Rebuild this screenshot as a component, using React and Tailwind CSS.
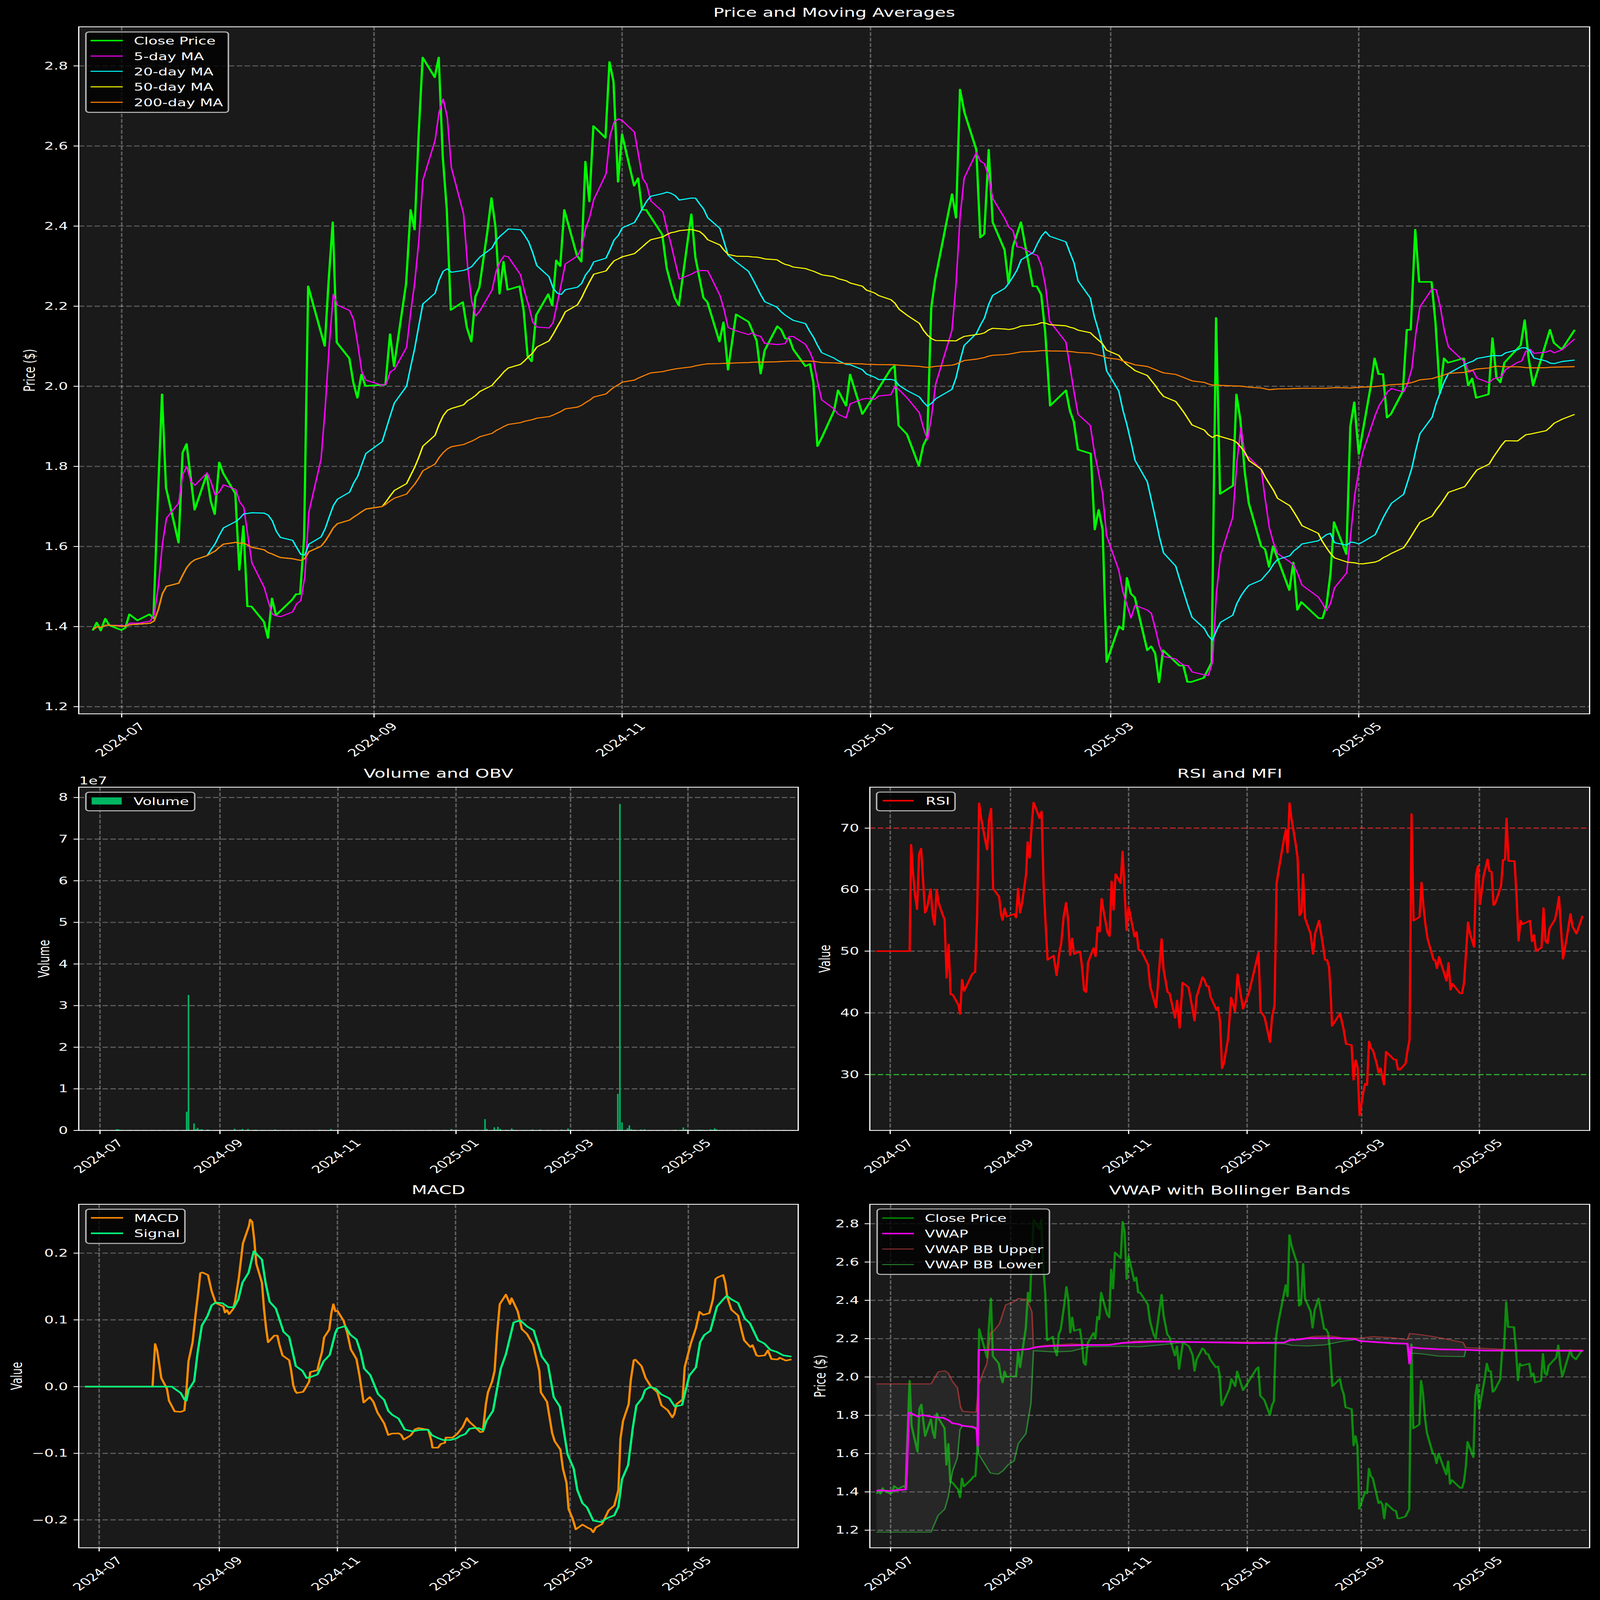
const z4 = [42,1380,50,1362,58,1380,67,1353,75,1368,99,1379,107,1374,115,1343,131,1357,155,1343,163,1352,171,1100,180,842,188,1055,213,1180,221,975,229,955,237,1030,245,1105,269,1025,277,1085,285,1115,294,997,302,1022,326,1068,334,1242,342,1142,350,1325,358,1325,383,1360,391,1397,399,1307,407,1345,439,1310,447,1297,455,1297,463,1170,471,596,504,732,512,580,520,450,528,724,553,760,561,815,569,850,577,797,585,823,625,820,634,705,642,778,666,590,675,422,683,467,691,250,699,75,723,120,731,75,739,300,747,420,755,650,779,632,787,690,796,722,804,620,812,598,828,470,836,395,844,460,852,613,860,540,868,604,892,596,900,650,908,755,916,767,925,662,949,614,957,640,965,537,973,550,981,422,1006,525,1015,540,1023,312,1031,403,1039,231,1063,258,1071,85,1079,130,1088,358,1096,250,1120,367,1128,350,1136,422,1144,422,1176,478,1185,555,1193,590,1201,622,1209,640,1234,432,1242,530,1258,622,1266,632,1290,722,1298,678,1307,786,1323,660,1348,677,1364,720,1372,795,1380,742,1405,687,1413,695,1421,715,1429,715,1437,740,1461,778,1470,773,1477,815,1485,960,1494,940,1518,880,1526,833,1542,868,1550,797];
const z5 = [79,887,87,873,136,785,144,777,152,913,169,933,193,1005,202,958,210,940,218,645,226,580,260,386,268,440,276,148,285,200,309,285,317,485,325,477,334,285,342,450,366,513,374,590,383,505,399,450,423,596,431,596,440,615,448,700,458,868,490,833,498,880,506,905,514,968,540,977,548,1150,556,1105,564,1150,572,1452,597,1370,605,1378,613,1260,621,1296,629,1305,654,1425,662,1416,670,1432,678,1498,686,1425,719,1460,727,1460,735,1497,743,1497,768,1488,784,1453,793,668,801,1069,827,1050,834,842,842,900,851,1020,859,1090,884,1188,892,1195,900,1235,908,1188,941,1288,949,1225,957,1333,965,1315,1000,1352,1008,1352,1016,1322,1024,1250,1031,1133,1056,1206,1064,915,1072,860,1081,978,1105,825,1113,760,1121,796,1130,796,1138,895,1146,887,1170,835,1178,695,1186,695,1195,467,1203,586,1228,586,1236,680,1245,840,1253,760,1261,770,1293,760,1302,822,1310,806,1318,850,1343,842,1351,714,1359,804,1367,815,1375,770,1408,730,1416,673,1424,760,1433,822,1467,695,1475,725,1491,740,1517,695];
const rsiZ = [120,793,187,793,190,347,194,470,198,560,202,617,206,385,210,363,214,500,218,632,222,610,229,533,233,640,237,683,241,535,245,590,253,640,257,660,261,905,265,765,269,975,273,975,285,1020,288,1057,292,913,296,960,312,890,316,882,318,882,322,650,326,173,330,235,338,325,342,367,346,240,350,195,354,530,366,565,370,640,373,663,377,613,381,648,393,640,396,637,400,652,404,530,408,632,412,590,420,470,423,335,427,402,431,270,435,170,439,190,447,235,451,207,455,520,459,680,463,830,475,812,479,866,481,895,487,790,490,765,495,650,500,590,504,660,508,810,512,740,516,805,528,795,532,860,536,958,540,965,544,840,555,780,559,815,563,692,567,712,571,573,575,625,583,715,587,730,591,500,595,620,599,470,609,508,613,375,621,705,625,607,633,690,637,732,641,713,645,787,650,790,664,850,668,940,680,1030,691,742,695,870,703,965,707,970,718,1073,722,1000,727,1115,733,925,745,945,757,1085,761,985,773,902,777,915,781,940,785,940,789,985,801,1040,804,1028,808,1090,812,1285,816,1260,824,1160,830,988,838,1047,843,890,848,960,854,1035,866,965,885,798,889,1045,897,1070,908,1175,912,1070,917,1020,921,510,925,455,936,320,940,283,943,380,947,172,951,240,959,340,963,400,967,643,971,630,974,470,978,655,989,720,994,805,998,720,1006,665,1014,770,1018,830,1022,830,1026,860,1030,1005,1032,1107,1048,1055,1055,1120,1060,1182,1071,1187,1075,1333,1079,1250,1083,1280,1087,1482,1095,1380,1098,1350,1102,1355,1106,1172,1110,1200,1114,1210,1122,1270,1125,1303,1129,1285,1136,1353,1140,1215,1156,1248,1160,1248,1164,1290,1168,1290,1179,1265,1183,1210,1187,1165,1191,218,1195,665,1207,650,1211,505,1215,610,1219,685,1223,740,1235,830,1238,830,1242,865,1246,817,1261,918,1265,842,1269,955,1273,930,1288,970,1292,970,1296,925,1304,672,1308,720,1316,775,1320,475,1324,435,1328,597,1335,480,1343,408,1347,458,1351,460,1355,600,1358,595,1370,520,1374,410,1378,410,1381,236,1385,415,1397,415,1401,560,1405,750,1409,665,1413,680,1425,668,1428,665,1432,752,1436,725,1440,793,1451,778,1455,612,1459,750,1463,760,1467,698,1478,660,1482,620,1486,565,1490,700,1494,825,1502,730,1505,690,1509,637,1513,690,1521,720,1533,645];
const macdZ = [165,866,297,866,302,687,306,715,310,770,314,830,325,875,329,925,340,970,352,972,359,966,363,880,367,760,375,680,381,560,386,470,390,390,394,387,405,398,412,465,420,515,435,530,438,555,442,545,446,562,454,540,458,505,465,410,473,265,481,215,485,190,487,165,491,175,495,250,499,350,510,430,514,540,518,620,522,680,534,652,540,652,544,690,550,735,563,755,567,800,571,860,575,885,578,893,590,888,594,875,602,845,604,805,618,797,622,760,627,720,631,660,641,627,645,560,649,520,653,550,657,548,669,590,676,640,683,710,694,750,700,820,708,933,720,910,727,930,735,975,748,1020,756,1069,763,1063,776,1062,781,1068,786,1088,800,1070,808,1045,815,1040,834,1047,840,1095,842,1122,853,1122,858,1107,866,1102,868,1080,881,1080,890,1065,901,1035,909,998,913,1012,925,1035,935,1057,940,1055,946,940,950,890,958,845,963,800,968,640,973,520,985,480,993,520,996,495,1008,550,1016,625,1026,645,1038,690,1050,800,1053,890,1065,930,1075,1060,1080,1095,1091,1130,1096,1210,1103,1270,1107,1380,1115,1420,1121,1465,1134,1445,1146,1460,1150,1463,1155,1477,1160,1457,1172,1443,1185,1385,1196,1365,1204,1300,1208,1085,1213,1010,1224,940,1228,840,1234,755,1237,753,1249,780,1257,830,1267,865,1280,890,1288,945,1300,965,1309,995,1313,980,1317,940,1329,920,1333,785,1345,685,1355,620,1362,552,1369,565,1381,558,1388,500,1393,415,1397,408,1408,398,1412,430,1416,490,1424,543,1437,568,1445,640,1449,672,1461,700,1465,692,1473,735,1477,738,1489,735,1495,714,1502,750,1514,752,1518,745,1530,757,1541,752];
const signalZ = [165,866,335,866,340,875,352,893,359,920,363,925,367,880,378,843,385,720,393,610,404,570,412,525,420,513,433,516,445,533,456,533,464,500,472,430,484,388,494,298,510,333,517,430,525,510,537,538,552,636,563,658,576,780,589,800,597,830,606,825,618,815,630,760,642,733,653,640,657,622,672,612,682,648,694,668,702,720,709,790,721,818,736,897,748,922,756,968,764,985,776,1000,788,1046,804,1054,816,1048,833,1047,841,1070,853,1082,863,1090,877,1090,889,1083,896,1073,906,1065,914,1043,922,1040,932,1040,941,1050,947,1010,960,967,975,790,985,730,1000,597,1013,588,1027,615,1039,630,1055,740,1067,775,1078,910,1090,950,1105,1150,1117,1210,1124,1300,1134,1355,1143,1373,1155,1428,1170,1434,1184,1416,1196,1406,1204,1370,1211,1255,1223,1195,1232,1040,1239,945,1250,915,1256,880,1265,868,1276,873,1287,898,1303,915,1314,950,1328,943,1342,820,1355,785,1363,680,1371,650,1383,632,1396,530,1408,500,1415,485,1424,500,1437,515,1450,580,1460,600,1476,672,1488,685,1500,712,1512,720,1525,735,1541,740];
const vwapZ = [140,1320,148,1318,168,1322,178,1318,198,1315,200,1250,204,990,206,988,222,1005,230,998,240,1002,255,1008,272,1010,282,1020,290,1033,302,1037,310,1044,330,1048,338,1055,340,1130,342,722,360,722,365,720,415,722,440,718,455,710,480,705,520,703,545,701,600,700,625,692,650,689,700,686,760,688,820,690,880,693,945,690,955,680,975,677,990,672,1040,671,1085,676,1095,684,1130,689,1160,693,1188,695,1192,780,1196,710,1210,714,1250,719,1300,721,1340,724,1535,725];
const upperZ = [140,866,248,866,262,815,275,810,282,820,290,855,300,882,306,963,310,982,330,986,337,985,342,870,352,810,358,780,365,650,372,640,383,610,395,530,410,518,420,503,437,507,447,560,450,710,470,703,500,699,525,696,560,700,600,698,650,684,690,682,760,687,820,688,890,688,945,690,955,682,975,675,1005,664,1035,662,1060,670,1090,672,1120,665,1160,670,1188,678,1192,652,1215,657,1240,665,1275,680,1298,690,1303,712,1340,715,1400,721,1535,722];
const lowerZ = [140,1496,248,1496,262,1425,275,1398,282,1345,290,1240,300,1180,305,1060,310,1045,330,1052,338,1060,342,1165,352,1200,365,1245,380,1250,390,1235,400,1210,412,1193,420,1120,435,1078,445,950,450,725,490,730,525,727,560,708,625,706,660,708,700,700,750,689,850,691,945,695,960,702,990,705,1025,700,1060,685,1085,678,1100,683,1160,695,1188,697,1192,735,1215,738,1250,748,1300,750,1303,722,1340,726,1535,727];
const volZ = [82,1500,86,1500,90,1507,102,1510,107,1510,112,1507,132,1510,166,1510,234,1320,238,119,250,1440,254,1497,258,1487,263,1502,267,1500,280,1502,284,1510,288,1510,292,1510,313,1507,321,1507,338,1495,342,1507,346,1509,350,1505,355,1497,367,1497,372,1510,376,1510,380,1507,384,1505,397,1507,426,1502,430,1509,434,1510,465,1510,502,1510,514,1510,522,1505,526,1507,531,1507,547,1497,552,1510,575,1510,587,1510,590,1510,603,1510,632,1507,648,1510,661,1510,669,1510,690,1510,700,1510,704,1510,708,1510,720,1507,733,1507,749,1510,753,1510,761,1507,765,1507,792,1510,808,1497,838,1507,846,1507,881,1396,885,1497,901,1480,905,1502,909,1475,914,1497,926,1505,930,1507,934,1510,939,1492,943,1505,955,1510,959,1510,963,1510,967,1510,971,1507,984,1502,988,1510,996,1510,1001,1502,1019,1507,1031,1507,1043,1510,1047,1502,1061,1492,1073,1507,1077,1510,1102,1507,1131,1510,1144,1510,1169,1136,1190,1490,1178,1429,1194,1459,1198,1500,1202,1507,1206,1505,1219,1502,1227,1500,1231,1510,1236,1510,1248,1510,1256,1510,1284,1510,1291,1507,1295,1505,1311,1482,1316,1500,1320,1505,1324,1507,1337,1507,1341,1507,1345,1505,1349,1505,1353,1507,1366,1510,1370,1500,1375,1505,1379,1491,1383,1500,1397,1510,1401,1510,1405,1507,1409,1510,1413,1510,1429,1510,1433,1510,1437,1510,1453,1510,1457,1510,1461,1510,1465,1510,1485,1510,1500,1510,1514,1510,1530,1510];

const pairs = (a, fx, fy) => {
  const out = [];
  for (let i = 0; i < a.length; i += 2) out.push([fx(a[i]), fy(a[i + 1])]);
  return out;
};
const toPath = (pts) => pts.map((p, i) => `${i ? 'L' : 'M'}${p[0].toFixed(1)} ${p[1].toFixed(1)}`).join('');

// Close price in the coordinates of the top chart
const closeMain = [
  ...pairs(z4, (x) => 200 + x / 0.7127, (y) => 100 + y / 0.56),
  ...pairs(z5, (x) => 2300 + x / 0.7226, (y) => 100 + y / 0.56),
];
const interp = (pts, x) => {
  if (x <= pts[0][0]) return pts[0][1];
  for (let i = 1; i < pts.length; i++) {
    if (x <= pts[i][0]) {
      const t = (x - pts[i - 1][0]) / (pts[i][0] - pts[i - 1][0]);
      return pts[i - 1][1] + t * (pts[i][1] - pts[i - 1][1]);
    }
  }
  return pts[pts.length - 1][1];
};
const HOLIDAYS = [3, 63, 150, 177, 184, 192, 203, 231, 291, 329, 353];
const days = [];
for (let d = -7; d <= 357; d++) {
  const dow = ((d % 7) + 7) % 7;
  if (dow < 5 && !HOLIDAYS.includes(d)) days.push(d);
}
const dayX = (d) => 340 + d * 11.37;
const daily = days.map((d) => interp(closeMain, dayX(d)));
const rolling = (n) =>
  days.map((d, i) => {
    const from = Math.max(0, i - n + 1);
    let s = 0;
    for (let k = from; k <= i; k++) s += daily[k];
    return [dayX(d), s / (i - from + 1)];
  });

const GRID = { stroke: '#ffffff', strokeOpacity: 0.3, strokeWidth: 4.17, strokeDasharray: '15.4 6.67' };
const LABEL = { fill: '#ffffff', fontSize: 41.67 };
const SVG_CLASS = 'block w-full h-full min-w-0 min-h-0';

function Axes({ box, xTicks, yTicks, title, titleY, yLabel, yLabelX, children, legend, offset }) {
  const [l, t, r, b] = box;
  return (
    <>
      <rect x={l} y={t} width={r - l} height={b - t} fill="#1a1a1a" />
      {xTicks.map((x) => (
        <line key={x} x1={x} x2={x} y1={t} y2={b} {...GRID} />
      ))}
      {yTicks.map(([y]) => (
        <line key={y} x1={l} x2={r} y1={y} y2={y} {...GRID} />
      ))}
      {children}
      {legend}
      <rect x={l} y={t} width={r - l} height={b - t} fill="none" stroke="#ffffff" strokeWidth={3.33} />
      {xTicks.map((x, i) => (
        <g key={x}>
          <line x1={x} x2={x} y1={b} y2={b + 14.6} stroke="#ffffff" strokeWidth={3.33} />
          <text
            {...LABEL}
            x={x - 4}
            y={b + 105}
            textAnchor="middle"
            dominantBaseline="central"
            transform={`rotate(-45 ${x - 4} ${b + 105})`}
          >
            {['2024-07', '2024-09', '2024-11', '2025-01', '2025-03', '2025-05'][i]}
          </text>
        </g>
      ))}
      {yTicks.map(([y, s]) => (
        <g key={y}>
          <line x1={l - 14.6} x2={l} y1={y} y2={y} stroke="#ffffff" strokeWidth={3.33} />
          <text {...LABEL} x={l - 30} y={y} textAnchor="end" dominantBaseline="central">
            {s}
          </text>
        </g>
      ))}
      <text fill="#ffffff" fontSize={50} x={(l + r) / 2} y={titleY} textAnchor="middle" dominantBaseline="central">
        {title}
      </text>
      <text
        {...LABEL}
        x={yLabelX}
        y={(t + b) / 2}
        textAnchor="middle"
        dominantBaseline="central"
        transform={`rotate(-90 ${yLabelX} ${(t + b) / 2})`}
      >
        {yLabel}
      </text>
      {offset}
    </>
  );
}

function Legend({ box, lineX, textX, rows }) {
  const [l, t, r, b] = box;
  return (
    <>
      <rect x={l} y={t} width={r - l} height={b - t} rx={9} fill="#000000" fillOpacity={0.8} stroke="#b4b4b4" strokeWidth={4.17} />
      {rows.map((row) => (
        <g key={row.label}>
          {row.patch ? (
            <rect x={lineX[0]} y={row.y - 14.5} width={lineX[1] - lineX[0]} height={29} fill={row.color} />
          ) : (
            <line x1={lineX[0]} x2={lineX[1]} y1={row.y} y2={row.y} stroke={row.color} strokeWidth={row.w} />
          )}
          <text {...LABEL} x={textX} y={row.y + 2} dominantBaseline="central">
            {row.label}
          </text>
        </g>
      ))}
    </>
  );
}

const Line = ({ pts, color, w, opacity }) => (
  <path d={toPath(pts)} fill="none" stroke={color} strokeWidth={w} strokeOpacity={opacity} strokeLinejoin="round" />
);

const BOX_MAIN = [220, 109, 4441, 2903];
const XT_MAIN = [340, 1045, 1738, 2432, 3103, 3796];

function MainChart() {
  const yT = [2.8, 2.6, 2.4, 2.2, 2.0, 1.8, 1.6, 1.4, 1.2].map((v, i) => [268 + i * 325.75, v.toFixed(1)]);
  return (
    <svg viewBox="0 0 4470 3100" preserveAspectRatio="none" className={`${SVG_CLASS} col-span-2`}>
      <Axes
        box={BOX_MAIN}
        xTicks={XT_MAIN}
        yTicks={yT}
        title="Price and Moving Averages"
        titleY={51}
        yLabel="Price ($)"
        yLabelX={83}
        legend={
          <Legend
            box={[240, 130, 638, 457]}
            lineX={[253, 343]}
            textX={374}
            rows={[
              { label: 'Close Price', color: '#00ff00', w: 6.25, y: 165 },
              { label: '5-day MA', color: '#ff00ff', w: 4.17, y: 228 },
              { label: '20-day MA', color: '#00ffff', w: 4.17, y: 290 },
              { label: '50-day MA', color: '#ffff00', w: 4.17, y: 353 },
              { label: '200-day MA', color: '#ff8000', w: 4.17, y: 416 },
            ]}
          />
        }
      >
        <Line pts={closeMain} color="#00ff00" w={6.25} />
        <Line pts={rolling(5)} color="#ff00ff" w={4.17} />
        <Line pts={rolling(20)} color="#00ffff" w={4.17} />
        <Line pts={rolling(50)} color="#ffff00" w={4.17} />
        <Line pts={rolling(200)} color="#ff8000" w={4.17} />
      </Axes>
    </svg>
  );
}

function VolumeChart() {
  const base = 4598;
  const unit = 169.25;
  const xz = (x) => 220 + x / 0.7762;
  const yT = [0, 1, 2, 3, 4, 5, 6, 7, 8].map((v) => [base - v * unit, String(v)]);
  const bars = pairs(volZ, xz, (y) => 4000 + y / 2.529);
  return (
    <svg viewBox="0 3100 2260 1690" preserveAspectRatio="none" className={SVG_CLASS}>
      <Axes
        box={[220, 3202, 2230, 4598]}
        xTicks={[279.3, 614.5, 944, 1274, 1594, 1922]}
        yTicks={yT}
        title="Volume and OBV"
        titleY={3146}
        yLabel="Volume"
        yLabelX={124}
        offset={
          <text {...LABEL} x={221} y={3176} dominantBaseline="central">
            1e7
          </text>
        }
        legend={
          <Legend
            box={[240, 3222.5, 544, 3298]}
            lineX={[256, 340]}
            textX={373}
            rows={[{ label: 'Volume', color: '#00b662', patch: true, y: 3258 }]}
          />
        }
      >
        {bars.map(([x, y]) => (
          <rect key={x} x={x - 2.2} y={y} width={4.4} height={base - y} fill="#00b662" />
        ))}
        <rect x={xz(1173.5) - 2.2} y={3270} width={4.4} height={base - 3270} fill="#00b662" />
      </Axes>
    </svg>
  );
}

function RsiChart() {
  const xz = (x) => 2280 + x / 0.716;
  const yz = (y) => 3100 + y / 1.0316;
  const yT = [
    [yz(277), '70'],
    [yz(535), '60'],
    [yz(793), '50'],
    [yz(1052), '40'],
    [yz(1311), '30'],
  ];
  return (
    <svg viewBox="2260 3100 2210 1690" preserveAspectRatio="none" className={SVG_CLASS}>
      <Axes
        box={[2430, 3202, 4441, 4598]}
        xTicks={[2487, 2823, 3153, 3484, 3804, 4133]}
        yTicks={yT}
        title="RSI and MFI"
        titleY={3146}
        yLabel="Value"
        yLabelX={2305}
        legend={
          <Legend
            box={[2449, 3222, 2668, 3298]}
            lineX={[2466, 2552]}
            textX={2586}
            rows={[{ label: 'RSI', color: '#ff0000', w: 6.25, y: 3257 }]}
          />
        }
      >
        <line x1={2430} x2={4441} y1={yz(277)} y2={yz(277)} stroke="#ff0000" strokeOpacity={0.6} strokeWidth={5} strokeDasharray="15.4 6.67" />
        <line x1={2430} x2={4441} y1={yz(1311)} y2={yz(1311)} stroke="#00ff00" strokeOpacity={0.5} strokeWidth={5} strokeDasharray="15.4 6.67" />
        <Line pts={pairs(rsiZ, xz, yz)} color="#ff0000" w={6.25} />
      </Axes>
    </svg>
  );
}

function MacdChart() {
  const xz = (x) => x / 0.6969;
  const yz = (y) => 4800 + y / 1.0316;
  const yT = [
    [yz(306), '0.2'],
    [yz(586), '0.1'],
    [yz(866), '0.0'],
    [yz(1146), '\u22120.1'],
    [yz(1425), '\u22120.2'],
  ];
  return (
    <svg viewBox="0 4790 2260 1717" preserveAspectRatio="none" className={SVG_CLASS}>
      <Axes
        box={[220, 4898, 2230, 6295]}
        xTicks={[277, 612.7, 942.7, 1272.7, 1592.8, 1923]}
        yTicks={yT}
        title="MACD"
        titleY={4840}
        yLabel="Value"
        yLabelX={47}
        legend={
          <Legend
            box={[240, 4918, 516.6, 5057]}
            lineX={[254, 344]}
            textX={374.5}
            rows={[
              { label: 'MACD', color: '#ff8c00', w: 6.25, y: 4953 },
              { label: 'Signal', color: '#00ff7f', w: 6.25, y: 5016 },
            ]}
          />
        }
      >
        <Line pts={pairs(macdZ, xz, yz)} color="#ff8c00" w={6.25} />
        <Line pts={pairs(signalZ, xz, yz)} color="#00ff7f" w={6.25} />
      </Axes>
    </svg>
  );
}

function VwapChart() {
  const xz = (x) => 2250 + x / 0.7063;
  const yz = (y) => 4800 + y / 1.0453;
  const yT = [2.8, 2.6, 2.4, 2.2, 2.0, 1.8, 1.6, 1.4, 1.2].map((v, i) => [4977 + i * 155.81, v.toFixed(1)]);
  const upper = pairs(upperZ, xz, yz);
  const lower = pairs(lowerZ, xz, yz);
  const band = `${toPath(upper)}${toPath([...lower].reverse()).replace('M', 'L')}Z`;
  const close = closeMain.map(([x, y]) => [
    2487.6 + ((x - 340) / 11.37) * 5.412,
    4977 + ((y - 268) / 2606) * 1246.5,
  ]);
  return (
    <svg viewBox="2260 4790 2210 1717" preserveAspectRatio="none" className={SVG_CLASS}>
      <Axes
        box={[2430, 4898, 4441, 6295]}
        xTicks={[2488, 2823.5, 3153, 3484.5, 3803, 4133]}
        yTicks={yT}
        title="VWAP with Bollinger Bands"
        titleY={4841}
        yLabel="Price ($)"
        yLabelX={2292}
        legend={
          <Legend
            box={[2450.4, 4917, 2931.7, 5183]}
            lineX={[2464.5, 2553]}
            textX={2583.7}
            rows={[
              { label: 'Close Price', color: '#008000', w: 6.25, y: 4954 },
              { label: 'VWAP', color: '#ff00ff', w: 6.25, y: 5017 },
              { label: 'VWAP BB Upper', color: '#8b2e2e', w: 4.17, y: 5080 },
              { label: 'VWAP BB Lower', color: '#237f2c', w: 4.17, y: 5143 },
            ]}
          />
        }
      >
        <Line pts={close} color="#00ff00" w={6.25} opacity={0.5} />
        <path d={band} fill="#ffffff" fillOpacity={0.06} />
        <Line pts={upper} color="#ff4444" w={4.17} opacity={0.5} />
        <Line pts={lower} color="#33dd44" w={4.17} opacity={0.5} />
        <Line pts={pairs(vwapZ, xz, yz)} color="#ff00ff" w={6.25} />
      </Axes>
    </svg>
  );
}

export default function App() {
  return (
    <div className="w-screen h-screen overflow-hidden bg-black grid grid-cols-[2260fr_2210fr] grid-rows-[3100fr_1690fr_1717fr] font-['DejaVu_Sans',sans-serif]">
      <MainChart />
      <VolumeChart />
      <RsiChart />
      <MacdChart />
      <VwapChart />
    </div>
  );
}
